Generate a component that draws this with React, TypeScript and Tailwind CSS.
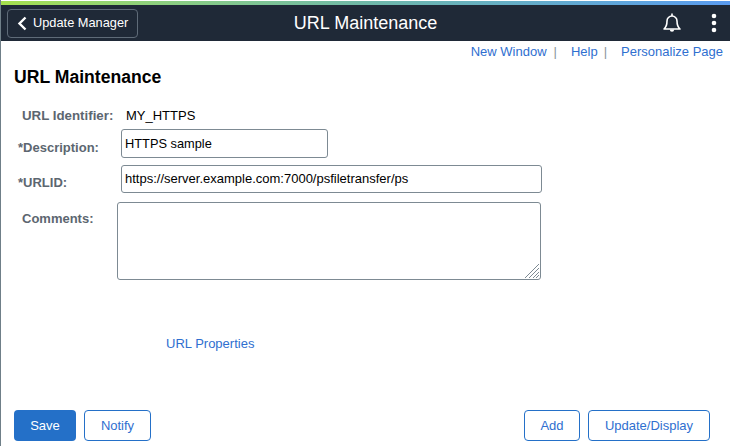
export default function App() {
    return (
        <div className="w-[730px] h-[446px] flex flex-col overflow-hidden bg-white border-l border-[#6f7f88] font-['Liberation_Sans',Arial,sans-serif]">
            {/* Barra de color */}
            <div className="h-[4px] mt-px shrink-0 bg-gradient-to-r from-[#a5e04d] via-[#6fb8a8] to-[#5a9bef]" />

            {/* Encabezado */}
            <div className="h-[36px] shrink-0 flex flex-row items-center bg-[#1f2937] pl-[6px] pr-[13px]">
                <div className="flex-1">
                    <button className="w-[131px] h-[29px] flex flex-row items-center gap-[6px] pl-[9px] rounded-[4px] border border-[#5f6b78] text-white text-[12.8px]">
                        <svg width="10" height="15" viewBox="0 0 10 15" fill="none" stroke="white" strokeWidth="2.4">
                            <polyline points="8.5,1.5 2.5,7.5 8.5,13.5" />
                        </svg>
                        <span>Update Manager</span>
                    </button>
                </div>
                <p className="text-white text-[18px] ml-[7px]">URL Maintenance</p>
                <div className="flex-1 flex flex-row items-center justify-end gap-[30px]">
                    <svg width="18" height="20" viewBox="0 0 18 20" fill="none" stroke="white" strokeWidth="1.6" strokeLinejoin="round">
                        <path d="M1 16 C3.5 14 4 11 4 8 A5 5 0 0 1 14 8 C14 11 14.5 14 17 16 Z" />
                        <path d="M9 0.5 V3" />
                        <path d="M6.8 16.5 A2.2 2.2 0 0 0 11.2 16.5 Z" fill="white" stroke="none" />
                    </svg>
                    <svg width="6" height="20" viewBox="0 0 6 20" fill="white">
                        <circle cx="3" cy="3" r="2.3" />
                        <circle cx="3" cy="10" r="2.3" />
                        <circle cx="3" cy="17" r="2.3" />
                    </svg>
                </div>
            </div>

            {/* Enlaces */}
            <div className="flex flex-row justify-end items-center text-[13px] text-[#2f6fd0] pr-[7px] pt-[3px] h-[18px]">
                <span>New Window</span>
                <span className="text-[#8a959c] ml-[7px] mr-[14px]">|</span>
                <span>Help</span>
                <span className="text-[#8a959c] ml-[6px] mr-[14px]">|</span>
                <span>Personalize Page</span>
            </div>

            {/* Titulo */}
            <h1 className="text-[17.6px] font-bold text-black pl-[13px] mt-[8px] leading-[20px]">URL Maintenance</h1>

            {/* Formulario */}
            <div className="flex flex-row items-center mt-[20px] h-[18px] pl-[21px]">
                <span className="w-[104px] text-[13.3px] font-bold text-[#5c6670]">URL Identifier:</span>
                <span className="text-[13px] text-black">MY_HTTPS</span>
            </div>
            <div className="flex flex-row mt-[4px] pl-[17px]">
                <span className="w-[103px] text-[13px] font-bold text-[#5c6670] pt-[9px]">*Description:</span>
                <div className="w-[207px] h-[29px] flex items-center px-[3px] rounded-[3px] border border-[#7d8a93] text-[12.8px] text-black">HTTPS sample</div>
            </div>
            <div className="flex flex-row mt-[7px] pl-[17px]">
                <span className="w-[103px] text-[13px] font-bold text-[#5c6670] pt-[8px]">*URLID:</span>
                <div className="w-[421px] h-[28px] flex items-center px-[3px] rounded-[3px] border border-[#7d8a93] text-[13px] text-black">https://server.example.com:7000/psfiletransfer/ps</div>
            </div>
            <div className="flex flex-row mt-[9px] pl-[21px]">
                <span className="w-[95px] text-[13px] font-bold text-[#5c6670] pt-[7px]">Comments:</span>
                <div className="relative w-[424px] h-[78px]">
                    <textarea className="w-full h-full block resize-none rounded-[3px] border border-[#7d8a93] outline-none" />
                    {/* Tirador */}
                    <svg className="absolute right-[2px] bottom-[2px]" width="14" height="14" viewBox="0 0 14 14" stroke="#7d8a93" strokeWidth="1">
                        <line x1="0" y1="14" x2="14" y2="0" />
                        <line x1="4" y1="14" x2="14" y2="4" />
                        <line x1="8" y1="14" x2="14" y2="8" />
                        <line x1="11" y1="14" x2="14" y2="11" />
                    </svg>
                </div>
            </div>

            <a className="ml-[165px] mt-[56px] text-[13px] text-[#2f6fd0] leading-[16px]">URL Properties</a>

            {/* Botones */}
            <div className="flex flex-row justify-between items-center mt-auto mb-[5px] pl-[13px] pr-[20px]">
                <div className="flex flex-row gap-[8px]">
                    <button className="w-[62px] h-[31px] rounded-[4px] bg-[#2470c8] text-white text-[13px]">Save</button>
                    <button className="w-[67px] h-[31px] rounded-[4px] border border-[#2470c8] text-[#2f6fd0] text-[13px]">Notify</button>
                </div>
                <div className="flex flex-row gap-[8px]">
                    <button className="w-[56px] h-[31px] rounded-[4px] border border-[#2470c8] text-[#2f6fd0] text-[13px]">Add</button>
                    <button className="w-[122px] h-[31px] rounded-[4px] border border-[#2470c8] text-[#2f6fd0] text-[13px]">Update/Display</button>
                </div>
            </div>
        </div>
    );
}
